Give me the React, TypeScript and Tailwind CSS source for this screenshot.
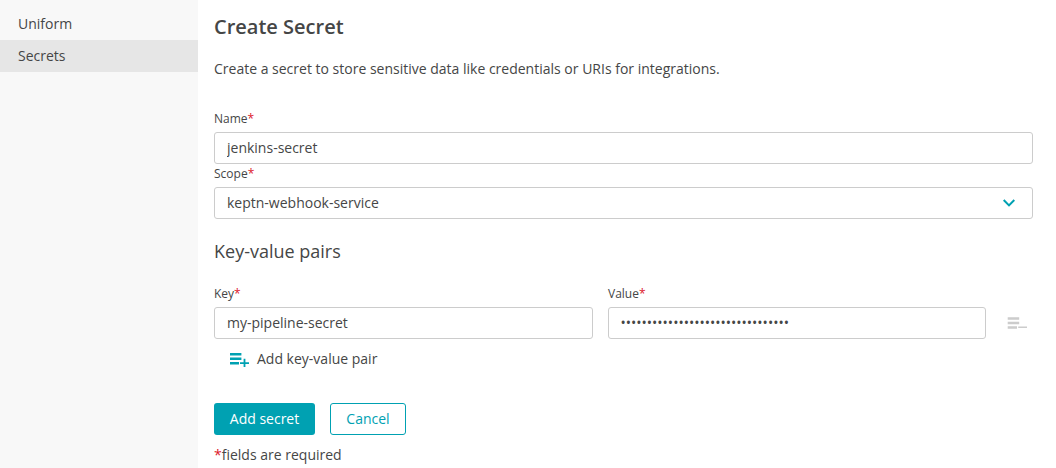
import React from "react";

const fieldCls = "flex h-8 w-full items-center rounded-[3px] border border-[#ccc] bg-white px-3 text-sm text-[#454646]";
const inputCls = "block h-8 w-full rounded-[3px] border border-[#ccc] bg-white px-3 pb-[2px] text-sm text-[#454646] outline-none";

function Label({ children }: { children: React.ReactNode }) {
  return (
    <div className="h-[23px] text-xs leading-[20px]">
      {children}
      <span className="text-[#dc172a]">*</span>
    </div>
  );
}

export default function App() {
  return (
    <div className="flex h-[468px] overflow-hidden bg-white font-['Open_Sans',sans-serif] text-sm text-[#454646] antialiased">
      <nav className="w-[198px] shrink-0 bg-[#f8f8f8] pt-2">
        <div className="h-8 pl-[18px] leading-8">Uniform</div>
        <div className="h-8 bg-[#e6e6e6] pl-[18px] leading-8">Secrets</div>
      </nav>
      <main className="w-[835px] pl-4 pt-3">
        <h1 className="h-[30px] text-xl font-semibold leading-[30px]">Create Secret</h1>
        <p className="mt-4 leading-[22px]">Create a secret to store sensitive data like credentials or URIs for integrations.</p>
        <div className="mt-[29px]">
          <Label>Name</Label>
          <input className={inputCls} defaultValue="jenkins-secret" />
        </div>
        <div>
          <Label>Scope</Label>
          <div className={fieldCls + " justify-between"}>
            keptn-webhook-service
            <svg className="mr-[5px]" width="12" height="8" viewBox="0 0 12 8" fill="none" stroke="#00a1b2" strokeWidth="2">
              <path d="M.7 1L6 6.4 11.3 1" />
            </svg>
          </div>
        </div>
        <h2 className="mt-5 h-6 text-lg leading-6">Key-value pairs</h2>
        <div className="mt-[21px] flex">
          <div className="w-[379px]">
            <Label>Key</Label>
            <input className={inputCls} defaultValue="my-pipeline-secret" />
          </div>
          <div className="ml-[15px] w-[378px]">
            <Label>Value</Label>
            <div className={fieldCls}><span className="-ml-[0.5px]">••••••••••••••••••••••••••••••••</span></div>
          </div>
          <svg className="ml-[21px] mt-[32px] shrink-0" width="20" height="14" viewBox="0 0 20 14" fill="#ccc">
            <path d="M.7 1.3h11.5v2.5H.7zM.7 5.7h11.5v2.6H.7zM.7 10.2h9.3v2.6H.7zM11.2 10.4h9v1.6h-9z" />
          </svg>
        </div>
        <button className="mt-1 flex h-8 items-center pl-4">
          <svg width="20" height="16" viewBox="0 0 20 16" fill="#00a1b2">
            <path d="M0 2h11.4v2.5H0zM0 6.5h11.4v2.5H0zM0 11h9v2.5H0zM10 11.2h3.6V7.7h1.8v3.5H19v1.8h-3.6v3.6h-1.8V13H10z" />
          </svg>
          <span className="ml-[7px]">Add key-value pair</span>
        </button>
        <div className="mt-7 flex gap-[15px]">
          <button className="h-8 w-[101px] rounded-[3px] bg-[#00a1b2] text-white">Add secret</button>
          <button className="h-8 w-[76px] rounded-[3px] border border-[#00a1b2] text-[#00a1b2]">Cancel</button>
        </div>
        <div className="mt-[9px] leading-[22px]"><span className="text-[#dc172a]">*</span>fields are required</div>
      </main>
    </div>
  );
}
